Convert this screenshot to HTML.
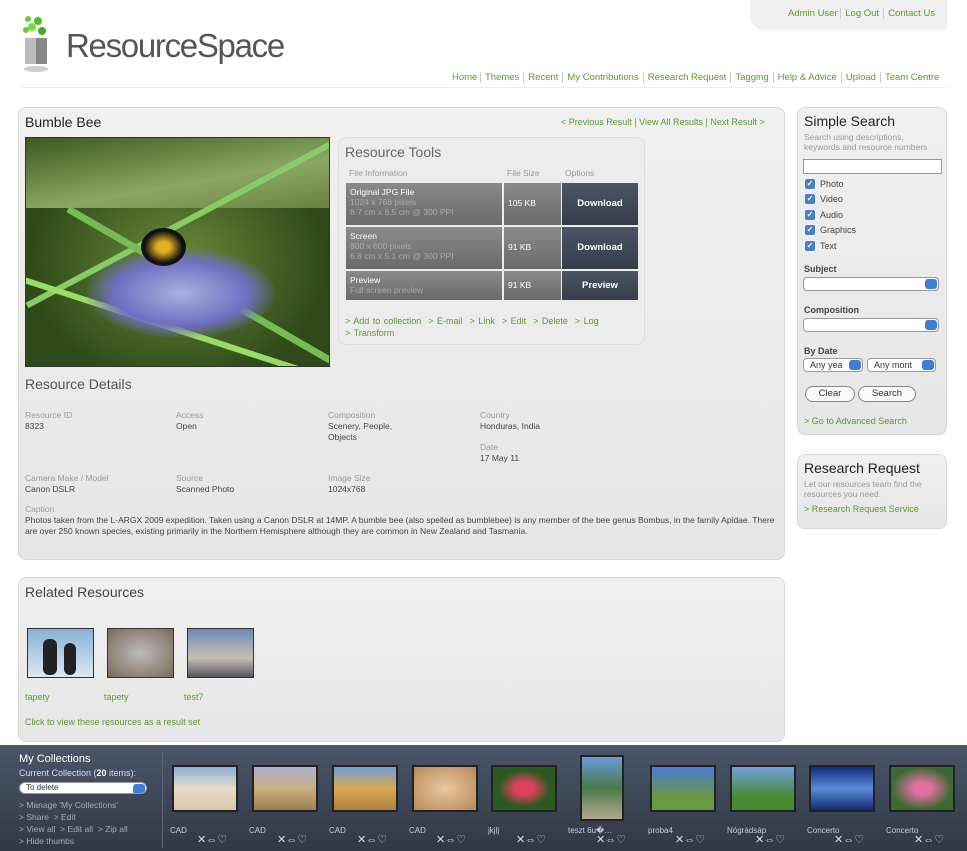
<!DOCTYPE html>
<html><head><meta charset="utf-8"><style>
*{margin:0;padding:0;box-sizing:border-box}
body{width:967px;height:851px;background:#fff;font-family:"Liberation Sans",sans-serif;position:relative;overflow:hidden;color:#333}
.a{position:absolute}
a,.g{color:#5a9a2a;text-decoration:none}
.panel{position:absolute;background:linear-gradient(#f0f0f0,#e6e6e6);border:1px solid #d8d8d8;border-radius:8px}
.nav{font-size:9.5px;color:#5a9a2a}
.nav span{border-left:1px solid #ccc;padding:0 4px}
.lbl{font-size:8.5px;color:#999}
.val{font-size:8.5px;color:#444}
.cell{position:absolute;background:linear-gradient(#8a8a8a,#6a6a6a);color:#fff;font-size:8.5px;padding:4px 4px}
.cell i{font-style:normal;color:#aaa;display:block;line-height:10px}
.btn{position:absolute;background:linear-gradient(#4c5566,#353d4b);color:#fff;font-weight:bold;font-size:9.5px;text-align:center}
.cb{font-size:9px;color:#444;height:15.5px;display:flex;align-items:center}
.cb b{display:inline-block;width:10px;height:10px;background:#4a7fc0;border-radius:2px;margin-right:5px;color:#fff;font-size:8px;line-height:10px;text-align:center}
.sel{position:absolute;height:14px;background:#fff;border:1px solid #999;border-radius:4px;font-size:9px;padding-left:6px;line-height:12px;overflow:hidden}
.sel:after{content:"";position:absolute;right:1px;top:1px;width:12px;height:10px;background:#3d7fd6;border-radius:3px}
.th{position:absolute;top:765px;height:47px;border:2px solid #222;width:66px}
.tl{position:absolute;top:826px;font-size:8px;color:#ccd}
.ic{position:absolute;top:833px;font-size:11px;color:#dde}
</style></head><body>
<!-- header -->
<div class="a" style="left:750px;top:0;width:197px;height:30px;background:#f0f0f0;border-radius:0 0 0 14px"></div>
<div class="a nav" style="left:788px;top:8px">Admin User <span>Log Out</span><span>Contact Us</span></div>
<svg class="a" style="left:20px;top:13px" width="40" height="60"><rect x="5" y="25" width="22" height="26" fill="#888"/><rect x="5" y="25" width="11" height="26" fill="#bbb"/><ellipse cx="16" cy="56" rx="12" ry="3" fill="#ccc"/><circle cx="8" cy="6" r="3" fill="#6c3"/><circle cx="18" cy="8" r="4" fill="#5b2"/><circle cx="12" cy="14" r="4" fill="#7d3"/><circle cx="22" cy="18" r="4" fill="#4a2"/><circle cx="6" cy="17" r="3" fill="#6c3"/></svg>
<div class="a" style="left:66px;top:27px;font-size:33px;color:#555;letter-spacing:-1.3px">ResourceSpace</div>
<div class="a nav" style="left:452px;top:72px">Home <span>Themes</span><span>Recent</span><span>My Contributions</span><span>Research Request</span><span>Tagging</span><span>Help &amp; Advice</span><span>Upload</span><span>Team Centre</span></div>
<div class="a" style="left:20px;top:87px;width:926px;height:1px;background:#eee"></div>

<!-- main panel -->
<div class="panel" style="left:18px;top:107px;width:767px;height:453px"></div>
<div class="a" style="left:25px;top:114px;font-size:14px;color:#222">Bumble Bee</div>
<div class="a g" style="left:561px;top:117px;font-size:9px">&lt; Previous Result | View All Results | Next Result &gt;</div>
<div class="a" style="left:25px;top:137px;width:305px;height:230px;background:radial-gradient(ellipse at 50% 55%,#6a8a3a,#2d4a18 70%);border:1px solid #333;overflow:hidden">
 <div class="a" style="left:0;top:0;width:305px;height:70px;background:linear-gradient(170deg,#3a5a20,#8aa860 60%,#6a8040)"></div>
 <div class="a" style="left:-20px;top:80px;width:360px;height:6px;background:#8c6;transform:rotate(-28deg)"></div>
 <div class="a" style="left:20px;top:150px;width:330px;height:7px;background:#7b5;transform:rotate(30deg)"></div>
 <div class="a" style="left:-10px;top:190px;width:330px;height:6px;background:#9d6;transform:rotate(18deg)"></div>
 <div class="a" style="left:60px;top:110px;width:190px;height:90px;border-radius:50%;background:radial-gradient(#a8b0e0,#6f6fc0 50%,transparent 72%)"></div>
 <div class="a" style="left:115px;top:90px;width:45px;height:38px;border-radius:50%;background:radial-gradient(#e0b020 20%,#111 60%)"></div>
</div>
<!-- tools -->
<div class="a" style="left:338px;top:137px;width:307px;height:208px;background:#ececec;border:1px solid #ddd;border-radius:8px"></div>
<div class="a" style="left:345px;top:144px;font-size:14px;color:#666">Resource Tools</div>
<div class="a lbl" style="left:349px;top:168px">File Information</div>
<div class="a lbl" style="left:507px;top:168px">File Size</div>
<div class="a lbl" style="left:565px;top:168px">Options</div>
<div class="cell" style="left:346px;top:183px;width:156px;height:42px">Original JPG File<i>1024 x 768 pixels</i><i>8.7 cm x 6.5 cm @ 300 PPI</i></div>
<div class="cell" style="left:504px;top:183px;width:57px;height:42px;padding-top:15px">105 KB</div>
<div class="btn" style="left:562px;top:183px;width:76px;height:42px;line-height:42px">Download</div>
<div class="cell" style="left:346px;top:227px;width:156px;height:42px">Screen<i>800 x 600 pixels</i><i>6.8 cm x 5.1 cm @ 300 PPI</i></div>
<div class="cell" style="left:504px;top:227px;width:57px;height:42px;padding-top:15px">91 KB</div>
<div class="btn" style="left:562px;top:227px;width:76px;height:42px;line-height:42px">Download</div>
<div class="cell" style="left:346px;top:271px;width:156px;height:29px">Preview<i>Full screen preview</i></div>
<div class="cell" style="left:504px;top:271px;width:57px;height:29px;padding-top:9px">91 KB</div>
<div class="btn" style="left:562px;top:271px;width:76px;height:29px;line-height:29px">Preview</div>
<div class="a g" style="left:345px;top:315px;font-size:9px;line-height:12px;word-spacing:1px">&gt; Add to collection &nbsp;&gt; E-mail &nbsp;&gt; Link &nbsp;&gt; Edit &nbsp;&gt; Delete &nbsp;&gt; Log<br>&gt; Transform</div>
<!-- details -->
<div class="a" style="left:25px;top:376px;font-size:14px;color:#555">Resource Details</div>
<div class="a lbl" style="left:25px;top:410px;line-height:11px">Resource ID<br><span class="val">8323</span></div>
<div class="a lbl" style="left:176px;top:410px;line-height:11px">Access<br><span class="val">Open</span></div>
<div class="a lbl" style="left:328px;top:410px;line-height:11px">Composition<br><span class="val">Scenery, People,<br>Objects</span></div>
<div class="a lbl" style="left:480px;top:410px;line-height:11px">Country<br><span class="val">Honduras, India</span></div>
<div class="a lbl" style="left:480px;top:442px;line-height:11px">Date<br><span class="val">17 May 11</span></div>
<div class="a lbl" style="left:25px;top:473px;line-height:11px">Camera Make / Model<br><span class="val">Canon DSLR</span></div>
<div class="a lbl" style="left:176px;top:473px;line-height:11px">Source<br><span class="val">Scanned Photo</span></div>
<div class="a lbl" style="left:328px;top:473px;line-height:11px">Image Size<br><span class="val">1024x768</span></div>
<div class="a lbl" style="left:25px;top:504px;line-height:11px;width:750px">Caption<br><span class="val">Photos taken from the L-ARGX 2009 expedition. Taken using a Canon DSLR at 14MP. A bumble bee (also spelled as bumblebee) is any member of the bee genus Bombus, in the family Apidae. There are over 250 known species, existing primarily in the Northern Hemisphere although they are common in New Zealand and Tasmania.</span></div>

<!-- related -->
<div class="panel" style="left:18px;top:577px;width:767px;height:165px"></div>
<div class="a" style="left:25px;top:584px;font-size:14px;color:#444">Related Resources</div>
<div class="a" style="left:27px;top:628px;width:67px;height:50px;border:1px solid #333;background:linear-gradient(#8ab0d8,#dde8f0)"><div class="a" style="left:15px;top:10px;width:14px;height:36px;background:#222;border-radius:6px"></div><div class="a" style="left:36px;top:14px;width:12px;height:32px;background:#222;border-radius:6px"></div></div>
<div class="a" style="left:107px;top:628px;width:67px;height:50px;border:1px solid #333;background:radial-gradient(#bbb,#7a6a58)"></div>
<div class="a" style="left:187px;top:628px;width:67px;height:50px;border:1px solid #333;background:linear-gradient(#6a8ab8,#c8c0b0 60%,#556)"></div>
<div class="a g" style="left:25px;top:692px;font-size:9px">tapety</div>
<div class="a g" style="left:104px;top:692px;font-size:9px">tapety</div>
<div class="a g" style="left:184px;top:692px;font-size:9px">test7</div>
<div class="a g" style="left:25px;top:717px;font-size:9px">Click to view these resources as a result set</div>

<!-- right -->
<div class="panel" style="left:797px;top:107px;width:150px;height:328px"></div>
<div class="a" style="left:804px;top:113px;font-size:14px;color:#222">Simple Search</div>
<div class="a" style="left:804px;top:132px;font-size:8.5px;color:#999;line-height:10px">Search using descriptions,<br>keywords and resource numbers</div>
<div class="a" style="left:803px;top:159px;width:139px;height:15px;background:#fff;border:1px solid #999"></div>
<div class="a" style="left:805px;top:176px">
<div class="cb"><b>✓</b>Photo</div><div class="cb"><b>✓</b>Video</div><div class="cb"><b>✓</b>Audio</div><div class="cb"><b>✓</b>Graphics</div><div class="cb"><b>✓</b>Text</div></div>
<div class="a" style="left:804px;top:264px;font-size:9px;font-weight:bold;color:#444">Subject</div>
<div class="sel" style="left:803px;top:277px;width:136px"></div>
<div class="a" style="left:804px;top:305px;font-size:9px;font-weight:bold;color:#444">Composition</div>
<div class="sel" style="left:803px;top:318px;width:136px"></div>
<div class="a" style="left:804px;top:346px;font-size:9px;font-weight:bold;color:#444">By Date</div>
<div class="sel" style="left:803px;top:358px;width:60px">Any yea</div>
<div class="sel" style="left:867px;top:358px;width:69px">Any mont</div>
<div class="a" style="left:805px;top:386px;width:50px;height:16px;border:1px solid #888;border-radius:9px;background:#fafafa;font-size:9.5px;text-align:center;line-height:14px">Clear</div>
<div class="a" style="left:858px;top:386px;width:58px;height:16px;border:1px solid #888;border-radius:9px;background:#fafafa;font-size:9.5px;text-align:center;line-height:14px">Search</div>
<div class="a g" style="left:804px;top:416px;font-size:9px">&gt; Go to Advanced Search</div>
<div class="panel" style="left:797px;top:454px;width:150px;height:75px"></div>
<div class="a" style="left:804px;top:460px;font-size:14px;color:#222">Research Request</div>
<div class="a" style="left:804px;top:479px;font-size:8.5px;color:#999;line-height:10px">Let our resources team find the<br>resources you need.</div>
<div class="a g" style="left:804px;top:504px;font-size:9px">&gt; Research Request Service</div>

<!-- bottom -->
<div class="a" style="left:0;top:745px;width:967px;height:106px;background:linear-gradient(#4a5668,#2f3848)"></div>
<div class="a" style="left:162px;top:752px;width:1px;height:96px;background:#5a6578"></div>
<div class="a" style="left:19px;top:753px;font-size:11px;color:#fff">My Collections</div>
<div class="a" style="left:19px;top:768px;font-size:9px;color:#dde">Current Collection (<b style="color:#fff">20</b> items):</div>
<div class="sel" style="left:19px;top:782px;width:128px;height:12px;line-height:10px;font-size:8px;border-radius:6px">To delete</div>
<div class="a" style="left:19px;top:799px;font-size:8.5px;color:#aab;line-height:12px">&gt; Manage 'My Collections'<br>&gt; Share &nbsp;&gt; Edit<br>&gt; View all &nbsp;&gt; Edit all &nbsp;&gt; Zip all<br>&gt; Hide thumbs</div>
<div class="th" style="left:172px;background:linear-gradient(#8ab0d8,#e8dcc8 50%,#d8c8a8)"></div>
<div class="th" style="left:252px;background:linear-gradient(#b0b0d0,#c8b080 50%,#a08050)"></div>
<div class="th" style="left:332px;background:linear-gradient(#70a0d8,#d8a850 50%,#b08040)"></div>
<div class="th" style="left:412px;background:radial-gradient(#e8c8a0,#b88858)"></div>
<div class="th" style="left:491px;background:radial-gradient(#e04060 20%,#2a5a20 60%)"></div>
<div class="th" style="left:580px;top:755px;width:44px;height:66px;background:linear-gradient(#6a9ad8,#4a7a4a 50%,#b0a890)"></div>
<div class="th" style="left:650px;background:linear-gradient(#4a7ad8,#6a9a40 70%)"></div>
<div class="th" style="left:730px;background:linear-gradient(#70a0e0,#4a8a30 70%)"></div>
<div class="th" style="left:809px;background:linear-gradient(#102a80,#5a8ad8 50%,#102a70)"></div>
<div class="th" style="left:889px;background:radial-gradient(#e070a0 20%,#3a6a30 70%)"></div>
<div class="tl" style="left:170px">CAD</div><div class="tl" style="left:249px">CAD</div><div class="tl" style="left:329px">CAD</div><div class="tl" style="left:409px">CAD</div><div class="tl" style="left:488px">jkjlj</div><div class="tl" style="left:568px">teszt 6u�…</div><div class="tl" style="left:648px">proba4</div><div class="tl" style="left:727px">Nógrádsáp</div><div class="tl" style="left:807px">Concerto</div><div class="tl" style="left:886px">Concerto</div>
<div class="ic" style="left:197px">✕⇔♡</div><div class="ic" style="left:277px">✕⇔♡</div><div class="ic" style="left:357px">✕⇔♡</div><div class="ic" style="left:436px">✕⇔♡</div><div class="ic" style="left:516px">✕⇔♡</div><div class="ic" style="left:596px">✕⇔♡</div><div class="ic" style="left:675px">✕⇔♡</div><div class="ic" style="left:755px">✕⇔♡</div><div class="ic" style="left:834px">✕⇔♡</div><div class="ic" style="left:914px">✕⇔♡</div>
</body></html>
